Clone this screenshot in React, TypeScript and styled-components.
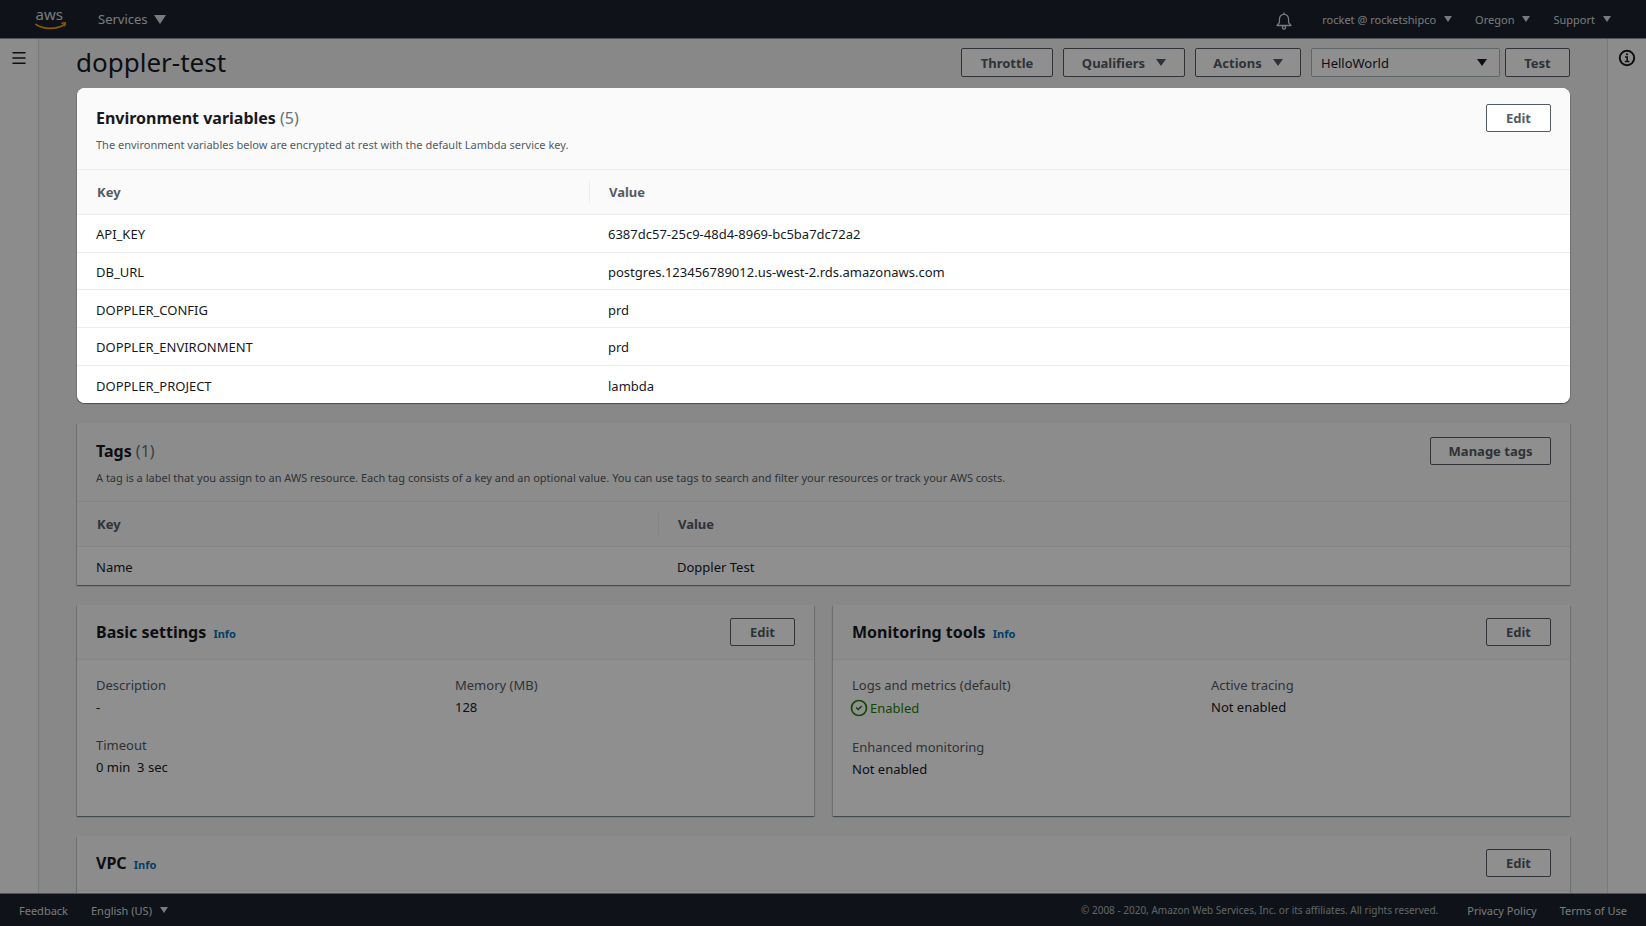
import React from "react";
import styled, { createGlobalStyle } from "styled-components";
import { CircleCheck, Menu } from "lucide-react";

const GlobalStyle = createGlobalStyle`
  html, body {
    margin: 0;
    padding: 0;
    height: 100%;
    overflow: hidden;
    font-family: "Noto Sans", "Liberation Sans", sans-serif;
    font-size: 13px;
    color: #16191f;
  }
  * {
    box-sizing: border-box;
  }
`;

const Page = styled.div`
  display: flex;
  flex-direction: column;
  height: 926px;
  background: #f2f3f3;
`;

const Backdrop = styled.div`
  position: fixed;
  top: 0;
  left: 0;
  right: 0;
  bottom: 0;
  background: rgba(0, 0, 0, 0.44);
  z-index: 10;
`;

const TopBar = styled.header`
  flex: 0 0 39px;
  display: flex;
  align-items: center;
  padding: 0 35px 0 35px;
  background: #1b232e;
  border-bottom: 1px solid #8d9296;
  color: #d5dbdb;
`;

const Logo = styled.svg`
  width: 32px;
  height: 30px;
  margin-right: 31px;
`;

const NavItem = styled.span<{ $gap?: number; $size?: number }>`
  display: inline-flex;
  align-items: center;
  gap: 8px;
  margin-right: ${({ $gap }) => $gap ?? 0}px;
  font-size: ${({ $size }) => $size ?? 11}px;
`;

const ServicesItem = styled(NavItem)`
  gap: 6px;
`;

const Spacer = styled.div`
  flex: 1;
`;

const Caret = styled.span<{ $size?: number; $color?: string }>`
  display: inline-block;
  width: 0;
  height: 0;
  border-left: ${({ $size }) => $size ?? 5}px solid transparent;
  border-right: ${({ $size }) => $size ?? 5}px solid transparent;
  border-top: ${({ $size }) => ($size ?? 5) * 1.5}px solid ${({ $color }) => $color ?? "currentColor"};
`;

const BellIcon = styled.svg`
  width: 18px;
  height: 19px;
  margin: 2px 29px 0 0;
  fill: none;
  stroke: currentColor;
  stroke-width: 1.3;
  stroke-linejoin: round;
`;

const Middle = styled.div`
  flex: 1;
  display: flex;
  min-height: 0;
`;

const Rail = styled.aside<{ $side: "left" | "right" }>`
  flex: 0 0 39px;
  display: flex;
  justify-content: center;
  padding-top: 10px;
  background: #fafafa;
  ${({ $side }) => ($side === "left" ? "border-right" : "border-left")}: 1px solid #d5dbdb;
  color: #16191f;
`;

const RailIcon = styled.span`
  display: block;
  line-height: 0;
  svg {
    stroke-width: 2;
  }
`;

const Main = styled.main`
  flex: 1;
  min-width: 0;
  overflow: hidden;
  padding: 0 37px 0 38px;
`;

const TitleRow = styled.div`
  height: 49px;
  display: flex;
  align-items: flex-start;
  padding-top: 9px;
`;

const PageTitle = styled.h1`
  flex: 1;
  margin: -5px 0 0 -1px;
  font-size: 26px;
  line-height: 38px;
  font-weight: 400;
  color: #16191f;
`;

const Button = styled.button<{ $width: number; $gap?: number }>`
  display: inline-flex;
  align-items: center;
  justify-content: center;
  gap: 11px;
  flex: none;
  width: ${({ $width }) => $width}px;
  height: 29px;
  margin-left: ${({ $gap }) => $gap ?? 0}px;
  padding: 0;
  background: #ffffff;
  border: 1px solid #545b64;
  border-radius: 2px;
  color: #545b64;
  font: 700 13px "Noto Sans", "Liberation Sans", sans-serif;
`;

const SelectBox = styled.div`
  display: flex;
  align-items: center;
  justify-content: space-between;
  width: 189px;
  height: 29px;
  margin-left: 10px;
  padding: 0 12px 0 9px;
  background: #ffffff;
  border: 1px solid #aab7b8;
  border-radius: 2px;
  font-size: 13px;
`;

const Stack = styled.div`
  display: flex;
  flex-direction: column;
  gap: 20px;
`;

const Card = styled.section<{ $raised?: boolean }>`
  position: relative;
  background: #ffffff;
  box-shadow: 0 1px 1px 0 rgba(0, 28, 36, 0.3), 1px 1px 1px 0 rgba(0, 28, 36, 0.15),
    -1px 1px 1px 0 rgba(0, 28, 36, 0.15);
  overflow: hidden;
  ${({ $raised }) => $raised && "z-index: 20; border-radius: 8px;"}
`;

const CardHead = styled.div<{ $top: number; $bottom: number }>`
  display: flex;
  justify-content: space-between;
  align-items: flex-start;
  padding: ${({ $top, $bottom }) => `${$top}px 19px ${$bottom}px`};
  background: #fafafa;
  border-bottom: 1px solid #eaeded;
`;

const EditButton = styled(Button)`
  height: 28px;
  margin-top: -2px;
`;

const HeadingText = styled.h2`
  margin: 0;
  font-size: 16px;
  line-height: 24px;
  font-weight: 700;
  color: #16191f;
`;

const Count = styled.span`
  font-weight: 400;
  color: #687078;
`;

const InfoLink = styled.a`
  margin-left: 3px;
  font-size: 11px;
  font-weight: 700;
  color: #0073bb;
`;

const Description = styled.p`
  margin: 6px 0 0;
  font-size: 11px;
  line-height: 17px;
  color: #545b64;
`;

const Row = styled.div<{ $key: number; $height: number; $head?: boolean }>`
  display: grid;
  grid-template-columns: ${({ $key }) => $key}px 1fr;
  align-items: center;
  height: ${({ $height }) => $height}px;
  padding: ${({ $head }) => ($head ? "0" : "2px")} 0 0 19px;
  background: ${({ $head }) => ($head ? "#fafafa" : "#ffffff")};
  border-bottom: 1px solid #eaeded;
  font-size: 13px;
  &:last-child {
    border-bottom: none;
  }
`;

const HeadCell = styled.div<{ $divided?: boolean }>`
  display: flex;
  align-items: center;
  height: 22px;
  margin-left: ${({ $divided }) => ($divided ? "-19px" : "1px")};
  padding-left: ${({ $divided }) => ($divided ? "19px" : "0")};
  border-left: ${({ $divided }) => ($divided ? "1px solid #eaeded" : "none")};
  font-weight: 700;
  color: #545b64;
`;

const Columns = styled.div`
  display: grid;
  grid-template-columns: 1fr 1fr;
  gap: 19px;
`;

const SmallHead = styled(CardHead)`
  align-items: center;
`;

const SettingsBody = styled.div`
  display: grid;
  grid-template-columns: 1fr 1fr;
  column-gap: 19px;
  row-gap: 18px;
  height: 156px;
  align-content: start;
  padding: 15px 19px 0;
`;

const Field = styled.div`
  display: flex;
  flex-direction: column;
  gap: 2px;
  line-height: 20px;
`;

const Label = styled.div`
  color: #545b64;
`;

const Enabled = styled.div`
  display: flex;
  align-items: center;
  gap: 2px;
  min-height: 22px;
  color: #1d8102;
`;

const CheckIcon = styled(CircleCheck)`
  width: 18px;
  height: 18px;
  margin-left: -2px;
  stroke-width: 2.2;
`;

const VpcCard = styled(Card)`
  height: 60px;
`;

const Footer = styled.footer`
  flex: 0 0 33px;
  display: flex;
  align-items: center;
  padding: 0 19px;
  background: #1b232e;
  border-top: 1px solid #8d9296;
  color: #d5dbdb;
`;

const Copyright = styled.span`
  margin-right: 29px;
  font-size: 10px;
  color: #aab7b8;
`;

const envVars = [
  ["API_KEY", "6387dc57-25c9-48d4-8969-bc5ba7dc72a2"],
  ["DB_URL", "postgres.123456789012.us-west-2.rds.amazonaws.com"],
  ["DOPPLER_CONFIG", "prd"],
  ["DOPPLER_ENVIRONMENT", "prd"],
  ["DOPPLER_PROJECT", "lambda"],
];

export default function App() {
  return (
    <Page>
      <GlobalStyle />
      <TopBar>
        <Logo viewBox="0 0 32 30">
          <text x="0.5" y="16" fontFamily="Noto Sans, sans-serif" fontSize="15" fill="#d5dbdb">
            aws
          </text>
          <path d="M1 20.5c8 5 20 5.5 28.5 0" fill="none" stroke="#ff9900" strokeWidth="1.7" strokeLinecap="round" />
          <path d="M26.5 19.2l4-.4-1 3.6" fill="none" stroke="#ff9900" strokeWidth="1.4" strokeLinejoin="round" />
        </Logo>
        <ServicesItem $size={13}>
          Services <Caret $size={6} />
        </ServicesItem>
        <Spacer />
        <BellIcon viewBox="0 0 18 19">
          <path d="M9 1.5v1.7c-3 .4-4.6 2.7-4.6 5.5v3l-2.4 2.8h14l-2.4-2.8v-3c0-2.8-1.6-5.1-4.6-5.5" />
          <circle cx="9" cy="16.4" r="1.6" />
        </BellIcon>
        <NavItem $gap={23}>
          rocket @ rocketshipco <Caret $size={4.5} />
        </NavItem>
        <NavItem $gap={23}>
          Oregon <Caret $size={4.5} />
        </NavItem>
        <NavItem>
          Support <Caret $size={4.5} />
        </NavItem>
      </TopBar>

      <Middle>
        <Rail $side="left">
          <RailIcon>
            <Menu size={18} />
          </RailIcon>
        </Rail>
        <Main>
          <TitleRow>
            <PageTitle>doppler-test</PageTitle>
            <Button $width={92}>Throttle</Button>
            <Button $width={122} $gap={10}>
              Qualifiers <Caret />
            </Button>
            <Button $width={106} $gap={10}>
              Actions <Caret />
            </Button>
            <SelectBox>
              HelloWorld <Caret />
            </SelectBox>
            <Button $width={65} $gap={5}>
              Test
            </Button>
          </TitleRow>

          <Stack>
            <Card $raised>
              <CardHead $top={18} $bottom={16}>
                <div>
                  <HeadingText>
                    Environment variables <Count>(5)</Count>
                  </HeadingText>
                  <Description>
                    The environment variables below are encrypted at rest with the default Lambda service key.
                  </Description>
                </div>
                <EditButton $width={65}>Edit</EditButton>
              </CardHead>
              <Row $key={512} $height={45} $head>
                <HeadCell>Key</HeadCell>
                <HeadCell $divided>Value</HeadCell>
              </Row>
              {envVars.map(([key, value]) => (
                <Row $key={512} $height={37.7} key={key}>
                  <div>{key}</div>
                  <div>{value}</div>
                </Row>
              ))}
            </Card>

            <Card>
              <CardHead $top={16} $bottom={15}>
                <div>
                  <HeadingText>
                    Tags <Count>(1)</Count>
                  </HeadingText>
                  <Description>
                    A tag is a label that you assign to an AWS resource. Each tag consists of a key and an optional
                    value. You can use tags to search and filter your resources or track your AWS costs.
                  </Description>
                </div>
                <EditButton $width={121}>Manage tags</EditButton>
              </CardHead>
              <Row $key={581} $height={45} $head>
                <HeadCell>Key</HeadCell>
                <HeadCell $divided>Value</HeadCell>
              </Row>
              <Row $key={581} $height={38}>
                <div>Name</div>
                <div>Doppler Test</div>
              </Row>
            </Card>

            <Columns>
              <Card>
                <SmallHead $top={15} $bottom={13}>
                  <HeadingText>
                    Basic settings <InfoLink>Info</InfoLink>
                  </HeadingText>
                  <EditButton $width={65}>Edit</EditButton>
                </SmallHead>
                <SettingsBody>
                  <Field>
                    <Label>Description</Label>
                    <div>-</div>
                  </Field>
                  <Field>
                    <Label>Memory (MB)</Label>
                    <div>128</div>
                  </Field>
                  <Field>
                    <Label>Timeout</Label>
                    <div>0 min&nbsp;&nbsp;3 sec</div>
                  </Field>
                </SettingsBody>
              </Card>
              <Card>
                <SmallHead $top={15} $bottom={13}>
                  <HeadingText>
                    Monitoring tools <InfoLink>Info</InfoLink>
                  </HeadingText>
                  <EditButton $width={65}>Edit</EditButton>
                </SmallHead>
                <SettingsBody>
                  <Field>
                    <Label>Logs and metrics (default)</Label>
                    <Enabled>
                      <CheckIcon /> Enabled
                    </Enabled>
                  </Field>
                  <Field>
                    <Label>Active tracing</Label>
                    <div>Not enabled</div>
                  </Field>
                  <Field>
                    <Label>Enhanced monitoring</Label>
                    <div>Not enabled</div>
                  </Field>
                </SettingsBody>
              </Card>
            </Columns>

            <VpcCard>
              <SmallHead $top={15} $bottom={13}>
                <HeadingText>
                  VPC <InfoLink>Info</InfoLink>
                </HeadingText>
                <EditButton $width={65}>Edit</EditButton>
              </SmallHead>
            </VpcCard>
          </Stack>
        </Main>
        <Rail $side="right">
          <RailIcon>
            <svg viewBox="0 0 18 18" width="18" height="18" fill="none" stroke="currentColor">
              <circle cx="9" cy="9" r="7.2" />
              <path d="M7 8h2.2v4.4M6.8 12.6h4.6" strokeWidth="1.5" />
              <circle cx="9" cy="5.3" r="1.1" fill="currentColor" stroke="none" />
            </svg>
          </RailIcon>
        </Rail>
      </Middle>

      <Footer>
        <NavItem $gap={23}>Feedback</NavItem>
        <NavItem>
          English (US) <Caret $size={4.5} />
        </NavItem>
        <Spacer />
        <Copyright>© 2008 - 2020, Amazon Web Services, Inc. or its affiliates. All rights reserved.</Copyright>
        <NavItem $gap={23}>Privacy Policy</NavItem>
        <NavItem>Terms of Use</NavItem>
      </Footer>
      <Backdrop />
    </Page>
  );
}
